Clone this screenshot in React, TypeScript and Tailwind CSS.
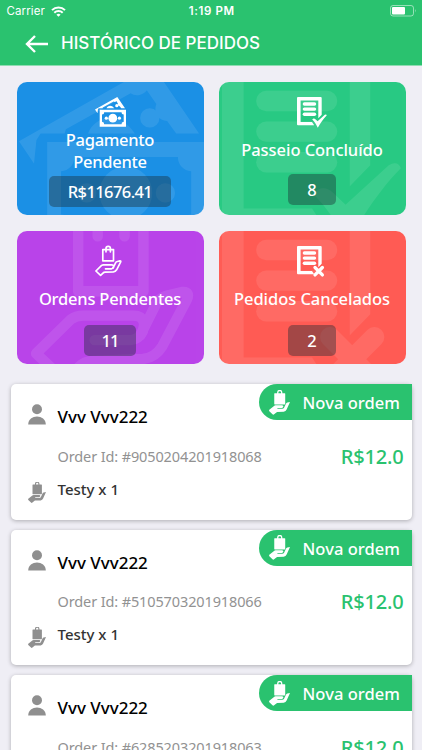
import type { ReactNode } from "react";

const MoneyGlyph = () => (
  <>
    <path
      fillRule="evenodd"
      d="M0 12.6 L22.3 0 L30 11.3 H26.2 L24.7 9.2 A2 2 0 0 1 22.9 6.4 L21.3 4.1 A2 2 0 0 1 18.6 4.6 L7.8 10.6 L7.6 11.3 H3.6 L2.9 12.4 L2.5 16.3 Z"
    />
    <path d="M11.5 11.3 C12.5 8.6 16.4 7.2 19.3 11.3 Z" />
    <circle cx="21.8" cy="8.7" r="1.6" />
    <path
      fillRule="evenodd"
      d="M4.7 12.7 H31 V29.7 H4.7 Z M9.2 15.2 A2.3 2.3 0 0 1 7 17.6 V24.8 A2.3 2.3 0 0 1 9.2 27.2 H26.5 A2.3 2.3 0 0 1 28.7 24.8 V17.6 A2.3 2.3 0 0 1 26.5 15.2 Z"
    />
    <circle cx="17.8" cy="21.2" r="4.4" />
    <circle cx="11.3" cy="21.2" r="1.6" />
    <circle cx="24.4" cy="21.2" r="1.6" />
  </>
);

const SheetGlyph = () => (
  <>
    <path d="M1 0 H23.7 Q24.7 0 24.7 1 V17.7 L21.3 21.2 V3.4 H3.6 V24.9 H15 L17.2 28.3 H1 Q0 28.3 0 27.3 V1 Q0 0 1 0 Z" />
    <rect x="5.7" y="5.3" width="13.5" height="3.4" rx="1.7" />
    <rect x="5.7" y="10.4" width="13.5" height="3.4" rx="1.7" />
    <rect x="5.7" y="15.5" width="13.5" height="3.4" rx="1.7" />
  </>
);

const DoneGlyph = () => (
  <>
    <SheetGlyph />
    <path d="M15.2 22.5 C16.2 21.2 17.4 21.3 18.4 22.2 L20.6 24.3 L27.8 17.7 Q29.3 16.9 29.8 18.2 C26.5 21.5 23.5 26 20.8 30.8 C19.3 27.6 17.6 24.8 15.2 22.5 Z" />
  </>
);

const CancelGlyph = () => (
  <>
    <SheetGlyph />
    <path d="M18 21.5 L25.4 28.9 M25.4 21.5 L18 28.9" stroke="currentColor" strokeWidth="3.3" strokeLinecap="round" />
  </>
);

const HandOutlineGlyph = () => (
  <g fill="none" stroke="currentColor" strokeWidth="1.7" strokeLinecap="round" strokeLinejoin="round">
    <path d="M7.8 3.6 H18.5 V14.8 H7.8 Z" />
    <path d="M11 5.8 V2.6 A2.2 2.2 0 0 1 15.4 2.6 V5.8" />
    <path d="M0.9 25 L6.6 19.4 Q7.4 18.8 8.6 18.8 H16.8 C18.8 18.8 19 20.4 18 22 L20.6 16.8 Q21.2 15.8 22.4 15.5 L25 14.9 Q26.2 14.9 25.6 16.2 L21.6 23.8 Q20.4 25.7 18.4 25.9 L10.2 26.2 Q8.8 26.3 8 27.1 L5.6 29.4 Z" />
    <path d="M10.5 22.8 H16.4 Q17.6 22.8 18.4 21.4" />
  </g>
);

const HandIcon = ({ className }: { className: string }) => (
  <svg viewBox="0 0 18 21" className={className} fill="currentColor">
    <rect x="4.5" y="2.6" width="9.4" height="9.6" rx="0.4" />
    <path d="M7.5 3.4 V1.9 A1.7 1.7 0 0 1 10.9 1.9 V3.4" fill="none" stroke="currentColor" strokeWidth="1.1" />
    <path d="M0 17 L4.3 13.4 Q4.8 12.9 5.6 12.9 H11.2 Q12.5 13 12.3 14.2 L11.3 15.2 H7.2 V15.9 H11.4 Q12.4 15.8 12.9 14.9 L14.5 11.5 Q14.9 10.7 15.7 10.5 L18 10 L15.1 16.6 Q14.4 18.2 12.6 18.4 L6.9 18.6 L4.1 20.8 Q3.5 21.1 3 20.6 L0.3 17.9 Z" />
  </svg>
);

const PersonIcon = () => (
  <svg viewBox="0 0 18 21" className="h-[21px] w-[18px]" fill="#8f8f8f">
    <circle cx="9" cy="5.2" r="5" />
    <path d="M0.2 20.6 C0.2 9.8 17.8 9.8 17.8 20.6 Z" />
  </svg>
);

type StatCardProps = {
  label: string;
  value: string;
  color: string;
  labelStyle: string;
  pill: string;
  glyph: ReactNode;
  watermark: string;
};

const StatCard = ({ label, value, color, labelStyle, pill, glyph, watermark }: StatCardProps) => (
  <div className={`relative flex h-[133px] flex-col items-center overflow-hidden rounded-[10px] pt-[15px] text-white ${color}`}>
    <svg viewBox="0 0 187 133" className="absolute inset-0 h-full w-full text-white opacity-[0.09]" fill="currentColor">
      <g transform={watermark}>{glyph}</g>
    </svg>
    <svg viewBox="0 0 31 31" className="relative h-[31px] w-[31px] shrink-0 overflow-visible" fill="currentColor">
      {glyph}
    </svg>
    <div className={`relative flex flex-1 items-center pb-[2px] text-center text-[16.5px] leading-[22.5px] font-medium ${labelStyle}`}>
      <span className="whitespace-pre-line">{label}</span>
    </div>
    <div className={`relative flex h-[31px] shrink-0 items-center justify-center rounded-[5px] bg-[#1a2a33]/40 pt-[2px] text-[16.5px] font-medium ${pill}`}>
      {value}
    </div>
  </div>
);

const orders = [
  { name: "Vvv Vvv222", id: "#9050204201918068", item: "Testy x 1", price: "R$12.0" },
  { name: "Vvv Vvv222", id: "#5105703201918066", item: "Testy x 1", price: "R$12.0" },
  { name: "Vvv Vvv222", id: "#6285203201918063", item: "Testy x 1", price: "R$12.0" }
];

const Header = () => (
  <header className="h-[66px] shrink-0 border-b border-[#8fdcb2] bg-[#2ac26f] font-['Inter',sans-serif] text-white">
    <div className="grid h-[22px] grid-cols-3 items-center pr-[5px] pl-[6.5px] text-[11.5px]">
      <div className="flex items-center gap-[6px] pt-px">
        <span className="tracking-[0.1px]">Carrier</span>
        <svg viewBox="0 0 15 11" className="h-[11px] w-[15px]" fill="none" stroke="currentColor" strokeWidth="2">
          <path d="M1 4.1 A9.2 9.2 0 0 1 14 4.1" />
          <path d="M3.3 6.7 A6 6 0 0 1 11.7 6.7" />
          <path d="M7.5 10.8 L5.4 8.7 A3 3 0 0 1 9.6 8.7 Z" fill="currentColor" stroke="none" />
        </svg>
      </div>
      <span className="pt-px text-center font-semibold tracking-[0.6px] whitespace-nowrap">1:19 PM</span>
      <svg viewBox="0 0 27 12" className="h-[12px] w-[27px] justify-self-end" fill="none">
        <rect x="0.5" y="0.5" width="23" height="10.5" rx="2.5" stroke="white" strokeOpacity="0.5" />
        <rect x="2" y="2" width="13" height="7.5" rx="1" fill="white" />
        <path d="M25 4 Q26.5 5.7 25 7.5 Z" fill="white" fillOpacity="0.5" />
      </svg>
    </div>
    <div className="flex h-[43px] items-center gap-[13px] pl-[25px]">
      <svg viewBox="0 0 23 18" className="h-[18px] w-[23px]" fill="none" stroke="currentColor" strokeWidth="2.4">
        <path d="M10 1 L2 9 L10 17 M1.5 9 H23" />
      </svg>
      <h1 className="pt-px text-[17px] font-medium whitespace-nowrap">HISTÓRICO DE PEDIDOS</h1>
    </div>
  </header>
);

const OrderCard = ({ order }: { order: (typeof orders)[number] }) => (
  <article className="flex h-[135.5px] shrink-0 flex-col rounded-[5px] bg-white shadow-[0_1px_4px_rgba(0,0,0,0.28)]">
    <div className="flex h-[45px] items-start justify-between">
      <div className="flex items-start gap-[11.5px] pt-[20px] pl-[17.5px]">
        <PersonIcon />
        <h2 className="pt-[2px] text-[17px] leading-[22px] font-medium text-black">{order.name}</h2>
      </div>
      <div className="flex h-[36px] w-[153px] items-center rounded-l-full bg-[#2ac26f] pl-[10px] text-white">
        <HandIcon className="h-[25px] w-[21px]" />
        <span className="pt-[3px] pl-[13px] text-[16.5px] font-medium tracking-[0.05px] whitespace-nowrap">Nova ordem</span>
      </div>
    </div>
    <div className="mt-[14px] flex h-[26px] items-center justify-between pr-[8px] pl-[47px]">
      <span className="pt-px text-[14.5px] tracking-[-0.12px] text-[#929292]">Order Id: {order.id}</span>
      <span className="pt-px text-[20px] font-medium tracking-[-0.2px] text-[#2ac26f]">{order.price}</span>
    </div>
    <div className="mt-[8.5px] flex gap-[11.5px] pl-[17.5px]">
      <HandIcon className="mt-[4px] h-[21px] w-[18px] text-[#8f8f8f]" />
      <span className="text-[15px] leading-[22px] font-medium text-[#333]">{order.item}</span>
    </div>
  </article>
);

const App = () => (
  <div className="flex h-[750px] w-[422px] flex-col overflow-hidden bg-[#efeef5] font-['Noto_Sans',sans-serif]">
    <Header />
    <section className="grid shrink-0 grid-cols-2 gap-x-[15px] gap-y-[15.5px] px-[16.5px] pt-[16px]">
      <StatCard
        label={"Pagamento\nPendente"}
        value="R$11676.41"
        color="bg-[#1c90e5]"
        labelStyle="tracking-[-0.3px]"
        pill="mb-[8px] w-[122px] tracking-[-0.6px]"
        glyph={<MoneyGlyph />}
        watermark="translate(2 -16.3) scale(6)"
      />
      <StatCard
        label="Passeio Concluído"
        value="8"
        color="bg-[#29ca83]"
        labelStyle="tracking-[-0.05px]"
        pill="mb-[10px] w-[48px]"
        glyph={<DoneGlyph />}
        watermark="translate(3 -23) scale(6)"
      />
      <StatCard
        label="Ordens Pendentes"
        value="11"
        color="bg-[#b944e9]"
        labelStyle="tracking-[-0.22px]"
        pill="mb-[8px] w-[52px] tracking-[-1px]"
        glyph={<HandOutlineGlyph />}
        watermark="translate(13.6 -30) scale(6.1)"
      />
      <StatCard
        label="Pedidos Cancelados"
        value="2"
        color="bg-[#ff5c55]"
        labelStyle="tracking-[-0.05px]"
        pill="mb-[8px] w-[48px]"
        glyph={<CancelGlyph />}
        watermark="translate(3 -23) scale(6)"
      />
    </section>
    <main className="flex flex-col gap-[10px] px-[10.5px] pt-[20.5px]">
      {orders.map((order) => (
        <OrderCard key={order.id} order={order} />
      ))}
    </main>
  </div>
);

export default App;
